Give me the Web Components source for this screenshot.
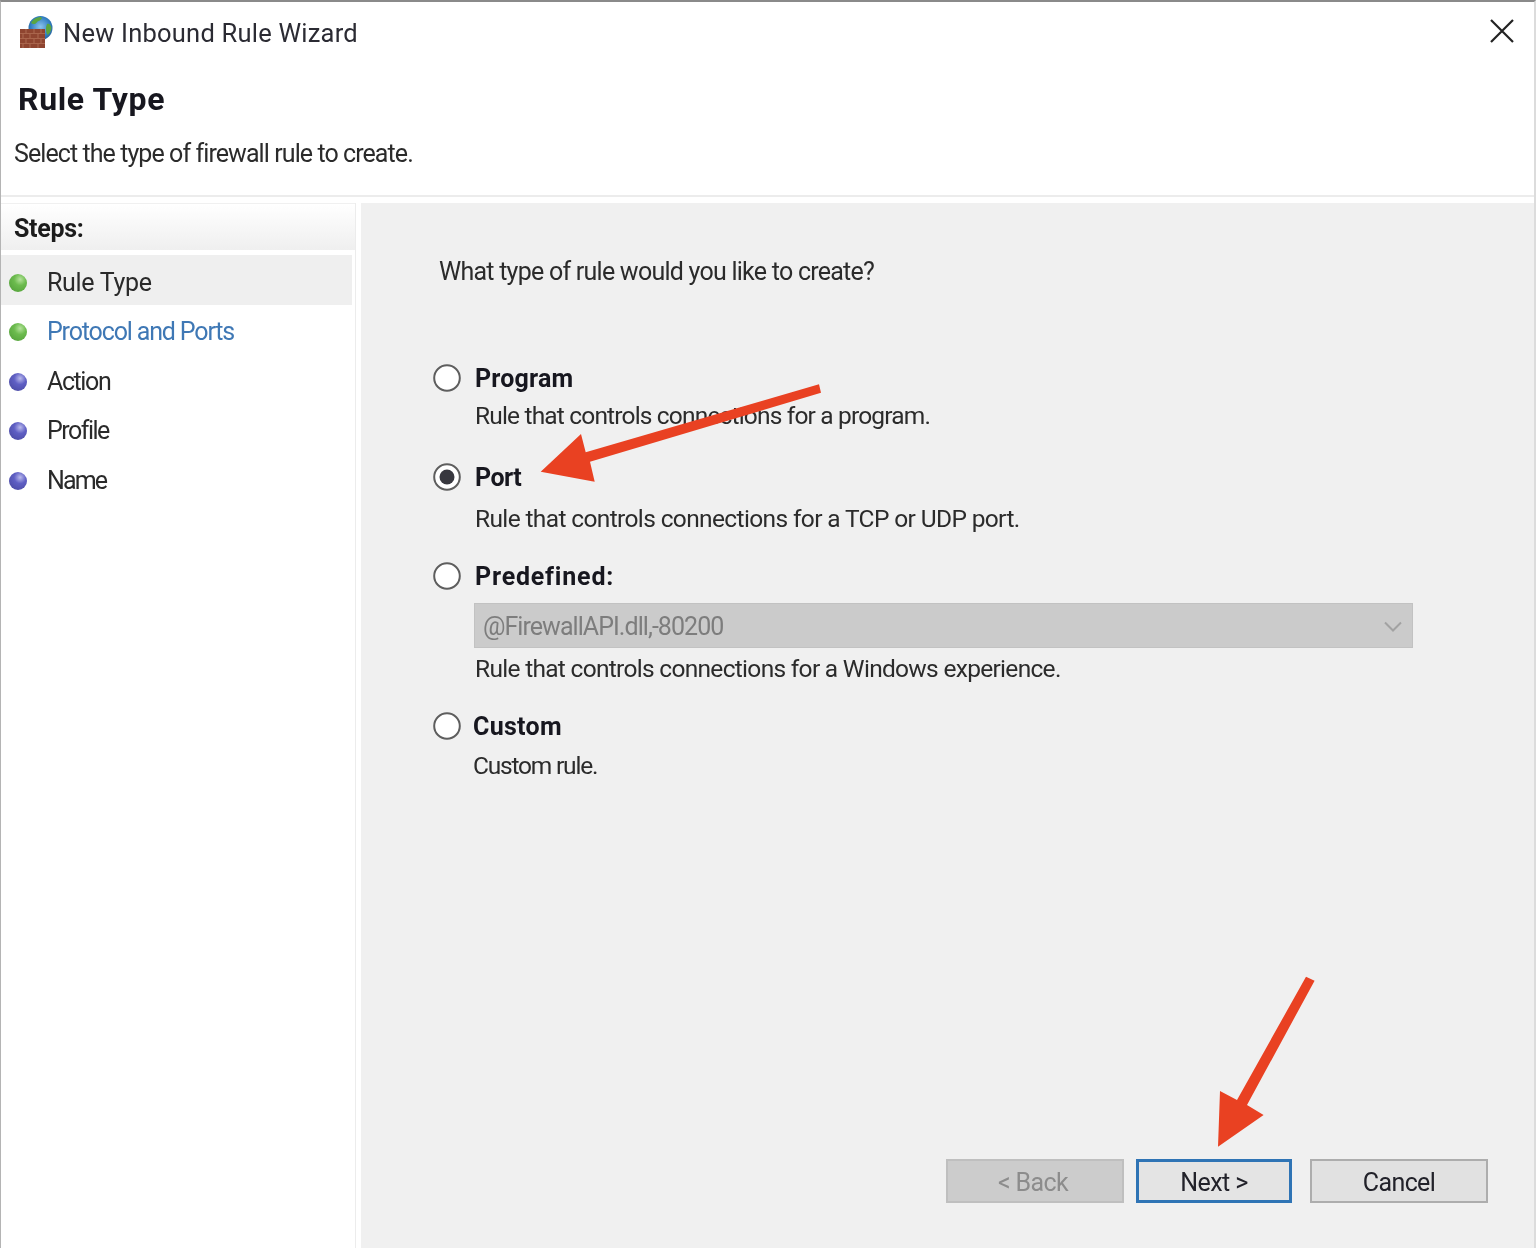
<!DOCTYPE html>
<html lang="en">
<head>
<meta charset="utf-8">
<title>New Inbound Rule Wizard</title>
<style>
  html, body { margin: 0; padding: 0; background: #fff; }
  body { font-family: Roboto, "Noto Sans", sans-serif; color: #1c1c1c; }
</style>
</head>
<body>
<wizard-window>
  <wizard-header slot="header" title-text="New Inbound Rule Wizard" heading="Rule Type" sub="Select the type of firewall rule to create."></wizard-header>
  <step-list slot="steps">
    <step-item state="done" current style="--ls:-.3px">Rule Type</step-item>
    <step-item state="done" link style="--ls:-1.150px">Protocol and Ports</step-item>
    <step-item style="--ls:-1.400px">Action</step-item>
    <step-item style="--ls:-1.500px">Profile</step-item>
    <step-item style="--ls:-1.900px">Name</step-item>
  </step-list>
  <rule-form slot="main">
    <rule-option label="Program" style="--top:71px;--gap:4px;--ls:.2px;--dls:-.83px">Rule that controls connections for a program.</rule-option>
    <rule-option label="Port" checked style="--top:27px;--gap:8px;--ls:-.5px;--dls:-.63px">Rule that controls connections for a TCP or UDP port.</rule-option>
    <rule-option label="Predefined:" style="--top:23px;--gap:1px;--ls:.8px;--dls:-.7px">
      Rule that controls connections for a Windows experience.
      <fake-select slot="extra">@FirewallAPI.dll,-80200</fake-select>
    </rule-option>
    <rule-option label="Custom" style="--top:23px;--gap:6px;--shift:-2px;--ls:.3px;--dls:-1.200px">Custom rule.</rule-option>
    <wizard-buttons slot="footer">
      <wizard-button disabled style="--w:178px">&lt; Back</wizard-button>
      <wizard-button focused style="--w:156px;--ml:12px">Next &gt;</wizard-button>
      <wizard-button style="--w:178px;--ml:18px">Cancel</wizard-button>
    </wizard-buttons>
  </rule-form>
  <call-outs slot="overlay"></call-outs>
</wizard-window>

<script>
function shadow(el, html) {
  el.attachShadow({ mode: 'open' }).innerHTML = html;
}

class WizardWindow extends HTMLElement {
  constructor() {
    super();
    shadow(this, `
      <style>
        :host { display: flex; flex-direction: column; position: relative; box-sizing: border-box;
                width: 1536px; height: 1248px; overflow: hidden; background: #fff; filter: blur(.45px);
                border-top: 2px solid #8a8a8a; border-left: 1px solid #b4b4b4; border-right: 2px solid #dcdcdc; }
        .body { flex: 1; display: flex; min-height: 0; margin-top: 6px; }
        .side { width: 354px; flex: none; border-right: 1px solid #ececec; }
        .main { flex: 1; margin-left: 5px; background: #f0f0f0; min-width: 0; }
      </style>
      <slot name="header"></slot>
      <div class="body">
        <div class="side"><slot name="steps"></slot></div>
        <div class="main"><slot name="main"></slot></div>
      </div>
      <slot name="overlay"></slot>`);
  }
}

class WizardHeader extends HTMLElement {
  constructor() {
    super();
    shadow(this, `
      <style>
        :host { display: block; height: 195px; box-sizing: border-box; border-bottom: 2px solid #ececec; }
        .bar { display: flex; align-items: center; height: 60px; padding: 0 19px 0 18px; }
        .title { margin-left: 10px; padding-top: 2px; font-size: 25.5px; letter-spacing: .22px; color: #2b2b33; flex: 1; line-height: 58px; }
        h1 { margin: 15px 0 0 17px; font-size: 32px; line-height: 44px; font-weight: 700; letter-spacing: .65px; color: #17171f; }
        p { margin: 16px 0 0 13px; font-size: 25px; line-height: 34px; color: #2b2b2b; letter-spacing: -.92px; }
      </style>
      <div class="bar">
        <svg width="34" height="34" viewBox="0 0 34 34">
          <defs>
            <radialGradient id="g" cx=".5" cy=".45" r=".6">
              <stop offset="0" stop-color="#8cc3ec"/><stop offset=".7" stop-color="#2f7cc0"/><stop offset="1" stop-color="#27598a"/>
            </radialGradient>
          </defs>
          <circle cx="21.5" cy="13" r="12" fill="url(#g)"/>
          <path d="M12 8c2-4 6-6 10-6 2 1 0 3-2 4-2 0-2 2-4 3-1 0-3 0-4-1zM28 9c2-1 4 1 4.500 4-.5 3-2 6-4 7-2-3-2-8-.5-11z" fill="#5aa540"/>
          <rect x="1" y="14" width="25" height="19" fill="#8f4530"/>
          <path d="M1 18.500h25M1 23.500h25M1 28.500h25M7 14v4.500M15 14v4.500M22 14v4.500M4 18.500v5M11 18.500v5M19 18.500v5M7 23.500v5M15 23.500v5M22 23.500v5M4 28.500v4.500M11 28.500v4.500M19 28.500v4.500" stroke="#a9654c" stroke-width="1.200" fill="none"/>
        </svg>
        <span class="title">${this.getAttribute('title-text')}</span>
        <svg width="26" height="26" viewBox="0 0 26 26" style="margin-top:-3px"><path d="M2 2 24 24M24 2 2 24" stroke="#222" stroke-width="2.200" fill="none"/></svg>
      </div>
      <h1>${this.getAttribute('heading')}</h1>
      <p>${this.getAttribute('sub')}</p>`);
  }
}

class StepList extends HTMLElement {
  constructor() {
    super();
    shadow(this, `
      <style>
        :host { display: block; }
        .head { height: 47px; line-height: 46px; padding: 2px 0 0 13px; font-size: 25px; font-weight: 700; letter-spacing: -.3px;
                color: #1c1c1c; background: linear-gradient(#ffffff, #efefef); border-top: 1px solid #f0f0f0; box-sizing: border-box; }
        .items { margin-top: 5px; }
      </style>
      <div class="head">Steps:</div>
      <div class="items"><slot></slot></div>`);
  }
}

class StepItem extends HTMLElement {
  constructor() {
    super();
    const done = this.getAttribute('state') === 'done';
    const id = done ? 'green' : 'purple';
    const c = done ? ['#b5e39b', '#6cbb4e', '#57a53d'] : ['#b9b9ec', '#5f5fc4', '#4d4da8'];
    shadow(this, `
      <style>
        :host { display: flex; align-items: center; height: 49.500px; width: 351px; font-size: 25px; letter-spacing: var(--ls, -.3px); color: #2a2a2a; }
        :host([current]) { background: #efefef; }
        :host([link]) { color: #3f78b5; }
        svg { margin: 6px 19px 0 7px; flex: none; }
        span { line-height: 45px; padding-top: 5px; }
      </style>
      <svg width="20" height="20" viewBox="0 0 20 20">
        <defs><radialGradient id="${id}" cx=".62" cy=".3" r=".75">
          <stop offset="0" stop-color="${c[0]}"/><stop offset=".45" stop-color="${c[1]}"/><stop offset="1" stop-color="${c[2]}"/>
        </radialGradient></defs>
        <circle cx="10" cy="10" r="9" fill="url(#${id})"/>
      </svg>
      <span><slot></slot></span>`);
  }
}

class RuleForm extends HTMLElement {
  constructor() {
    super();
    shadow(this, `
      <style>
        :host { display: flex; flex-direction: column; height: 100%; box-sizing: border-box; padding: 0 45px 45px 72px; }
        .q { margin: 51px 0 0 6px; font-size: 25px; line-height: 36px; letter-spacing: -.75px; color: #2b2b2b; }
        .opts { flex: 1; }
      </style>
      <div class="q">What type of rule would you like to create?</div>
      <div class="opts"><slot></slot></div>
      <slot name="footer"></slot>`);
  }
}

class RuleOption extends HTMLElement {
  constructor() {
    super();
    const on = this.hasAttribute('checked');
    shadow(this, `
      <style>
        :host { display: block; margin-top: var(--top, 30px); }
        .row { display: flex; align-items: center; height: 34px; }
        .radio { width: 28px; height: 28px; flex: none; }
        .label { margin-left: calc(14px + var(--shift, 0px)); padding-top: 2px; font-size: 25px; font-weight: 700; letter-spacing: var(--ls, -.5px); color: #17171f; line-height: 32px; }
        .desc { margin: var(--gap, 3px) 0 0 calc(42px + var(--shift, 0px)); font-size: 24.500px; letter-spacing: var(--dls, -.7px); line-height: 34px; color: #2b2b2b; }
        .extra { margin-left: 41px; }
      </style>
      <div class="row">
        <svg class="radio" viewBox="0 0 28 28">
          <circle cx="14" cy="14" r="12.800" fill="#fff" stroke="#5e5e5e" stroke-width="2"/>
          ${on ? '<circle cx="14" cy="14" r="7.500" fill="#38383f"/>' : ''}
        </svg>
        <span class="label">${this.getAttribute('label')}</span>
      </div>
      <div class="extra"><slot name="extra"></slot></div>
      <div class="desc"><slot></slot></div>`);
  }
}

class FakeSelect extends HTMLElement {
  constructor() {
    super();
    shadow(this, `
      <style>
        :host { display: flex; align-items: center; justify-content: space-between; box-sizing: border-box; width: 939px; height: 45px;
                padding: 1px 10px 0 8px; background: #cbcbcb; border: 1px solid #c2c2c2; font-size: 25px; letter-spacing: -.95px; color: #7d7d7d; margin: 10px 0 4px; }
      </style>
      <span><slot></slot></span>
      <svg width="18" height="11" viewBox="0 0 18 11"><path d="M1 1.500 9 9.500 17 1.500" stroke="#a2a2a2" stroke-width="2" fill="none"/></svg>`);
  }
}

class WizardButtons extends HTMLElement {
  constructor() {
    super();
    shadow(this, `
      <style>:host { display: flex; padding-left: 513px; }</style>
      <slot></slot>`);
  }
}

class WizardButton extends HTMLElement {
  constructor() {
    super();
    shadow(this, `
      <style>
        :host { display: flex; align-items: center; justify-content: center; box-sizing: border-box; width: var(--w); height: 44px; padding-top: 3px;
                margin-left: var(--ml, 0); background: #e1e1e1; border: 2px solid #adadad; font-size: 25px; letter-spacing: -.6px; color: #22222a; }
        :host([disabled]) { background: #cccccc; border-color: #bfbfbf; color: #8c8c8c; padding-right: 4px; }
        :host([focused]) { border: 3px solid #2f74b5; background: #e4e4e4; }
      </style>
      <slot></slot>`);
  }
}

// red annotation arrows sit over the dialog
class CallOuts extends HTMLElement {
  constructor() {
    super();
    shadow(this, `
      <style>
        :host { position: absolute; left: -1px; top: -2px; width: 1536px; height: 1248px; pointer-events: none; }
        svg { display: block; }
      </style>
      <svg width="1536" height="1248" viewBox="0 0 1536 1248" fill="#e94122">
        <polygon points="819,384.300 821,392.700 590,461.700 594.700,481.700 540.700,471.700 581,434 585.700,452.300"/>
        <polygon points="1306,976.700 1314.600,980.700 1247,1105 1263.600,1115 1218,1146.700 1220,1091 1237,1100"/>
      </svg>`);
  }
}

customElements.define('wizard-window', WizardWindow);
customElements.define('wizard-header', WizardHeader);
customElements.define('step-list', StepList);
customElements.define('step-item', StepItem);
customElements.define('rule-form', RuleForm);
customElements.define('rule-option', RuleOption);
customElements.define('fake-select', FakeSelect);
customElements.define('wizard-buttons', WizardButtons);
customElements.define('wizard-button', WizardButton);
customElements.define('call-outs', CallOuts);
</script>
</body>
</html>
